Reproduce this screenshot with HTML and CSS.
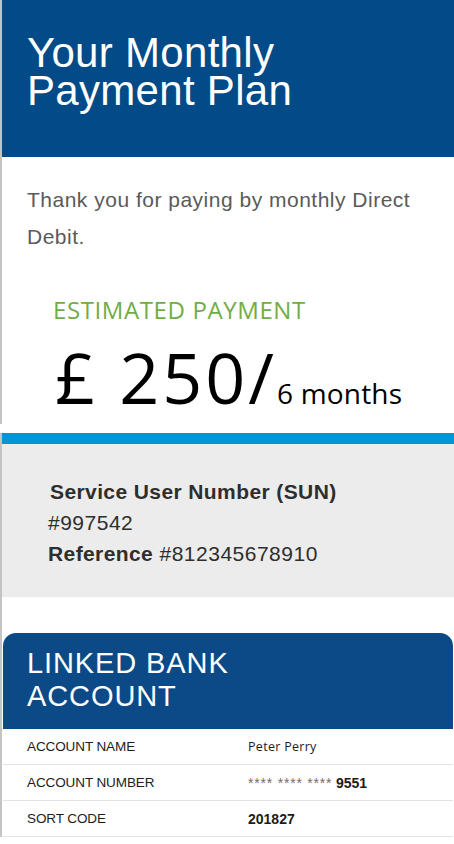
FILE: index.html
```html
<!DOCTYPE html>
<html lang="en">
<head>
<meta charset="utf-8">
<title>Your Monthly Payment Plan</title>
<link rel="stylesheet" href="styles.css">
</head>
<body>
<div class="top">
  <header class="hero">
    <h1 class="hero-title"><span class="hero-line">Your Monthly</span><span class="hero-line">Payment Plan</span></h1>
  </header>
  <section class="intro">
    <p class="intro-text">Thank you for paying by monthly Direct Debit.</p>
    <div class="estimate">
      <div class="estimate-label">ESTIMATED PAYMENT</div>
      <div class="estimate-amount">£ 250/<span class="estimate-period">6 months</span></div>
    </div>
  </section>
</div>
<div class="gap"></div>
<div class="lower">
  <div class="accent-bar"></div>
  <section class="sun">
    <div class="sun-title">Service User Number (SUN)</div>
    <div class="sun-line">#997542</div>
    <div class="sun-line"><b class="sun-strong">Reference</b> #812345678910</div>
  </section>
  <section class="card">
    <h2 class="card-title">LINKED BANK<br>ACCOUNT</h2>
    <div class="row">
      <span class="row-label">ACCOUNT NAME</span>
      <span class="row-value name">Peter Perry</span>
    </div>
    <div class="row">
      <span class="row-label">ACCOUNT NUMBER</span>
      <span class="row-value"><span class="stars">**** **** ****</span> <b class="num">9551</b></span>
    </div>
    <div class="row">
      <span class="row-label">SORT CODE</span>
      <span class="row-value"><b class="num">201827</b></span>
    </div>
  </section>
</div>
</body>
</html>
```
FILE: styles.css
```css
html, body {
  margin: 0;
  padding: 0;
  background: #ffffff;
}
body {
  width: 454px;
  overflow: hidden;
  font-family: "Liberation Sans", Arial, sans-serif;
}
.top {
  border-left: 2px solid #c4c4c4;
}
.hero {
  background: #024a88;
  padding: 34px 0 47px 25px;
}
.hero-title {
  margin: 0;
  color: #ffffff;
  font-weight: normal;
  font-size: 42px;
  letter-spacing: 0.3px;
  display: flex;
  flex-direction: column;
}
.hero-line {
  display: block;
  height: 38px;
  line-height: 38px;
  white-space: nowrap;
}
.intro {
  padding: 24px 0 7px 25px;
}
.intro-text {
  margin: 0;
  color: #5a5a5a;
  font-size: 21px;
  line-height: 37px;
  letter-spacing: 0.5px;
  padding-right: 30px;
}
.estimate {
  padding: 40px 0 0 26px;
  font-family: "Open Sans", sans-serif;
}
.estimate-label {
  color: #70ad47;
  font-size: 24px;
  line-height: 30px;
  letter-spacing: 0.6px;
}
.estimate-amount {
  color: #000000;
  font-size: 70px;
  line-height: 80px;
  margin-top: 12px;
  padding-left: 2px;
  letter-spacing: 3px;
  white-space: nowrap;
}
.estimate-period {
  font-size: 28px;
  line-height: 30px;
  letter-spacing: 0.2px;
}
.gap {
  height: 9px;
}
.lower {
  border-left: 2px solid #c4c4c4;
}
.accent-bar {
  height: 11px;
  background: #0096d6;
}
.sun {
  background: #ececec;
  padding: 32px 0 28px 46px;
  color: #2e2e2e;
  font-size: 21px;
  line-height: 31px;
  letter-spacing: 0.5px;
}
.sun-title,
.sun-strong {
  font-weight: bold;
  letter-spacing: 0.4px;
}
.sun-title {
  padding-left: 2px;
}
.card {
  margin: 36px 1px 0 1px;
  border-radius: 13px 13px 0 0;
  overflow: hidden;
}
.card-title {
  margin: 0;
  background: #0b4a86;
  color: #ffffff;
  font-weight: normal;
  font-size: 29px;
  line-height: 33px;
  letter-spacing: 0.9px;
  padding: 14px 0 16px 24px;
}
.row {
  display: grid;
  grid-template-columns: 221px 1fr;
  align-items: center;
  height: 36px;
  box-sizing: border-box;
  border-bottom: 1px solid #e2e2e2;
  padding-left: 24px;
  color: #1c1c1c;
}
.row-label {
  font-size: 13.5px;
  letter-spacing: -0.1px;
}
.row-value {
  font-size: 13px;
}
.name {
  font-family: "Open Sans", sans-serif;
  font-size: 12.5px;
  letter-spacing: 0.3px;
}
.stars {
  color: #7c6a6a;
  font-size: 14px;
  letter-spacing: 0.8px;
}
.num {
  font-size: 14px;
  font-weight: bold;
}
```
